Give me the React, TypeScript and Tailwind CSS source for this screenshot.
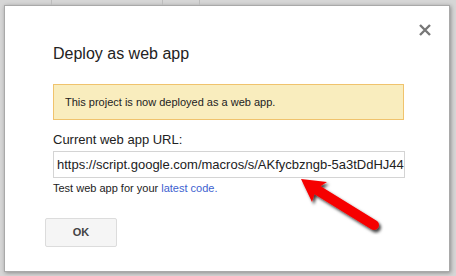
import React from "react";

function Arrow() {
  return (
    <svg
      className="absolute left-0 top-0 pointer-events-none"
      width={456}
      height={276}
      viewBox="0 0 456 276"
    >
      <defs>
        <filter id="sh" x="-20%" y="-20%" width="140%" height="140%">
          <feDropShadow dx="2" dy="2.5" stdDeviation="1.6" floodColor="#000" floodOpacity="0.75" />
        </filter>
      </defs>
      <g filter="url(#sh)">
        <line x1="314" y1="188" x2="374" y2="225" stroke="#f60000" strokeWidth="10" strokeLinecap="round" />
        <polygon points="301,179 312,202 316,189 327,182" fill="#f60000" />
      </g>
    </svg>
  );
}

export default function App() {
  return (
    <div className="relative w-[456px] h-[276px] overflow-hidden bg-[#d6d6d6] font-['Liberation_Sans',Arial,sans-serif]">
      {/* top strip of the underlying sheet */}
      <div className="flex h-[5px]">
        <div className="w-[52px] border-r border-[#bdbdbd]" />
        <div className="w-[111px] border-r border-[#bdbdbd]" />
        <div className="w-[37px] border-r border-[#bdbdbd]" />
      </div>

      <div className="pl-[4px]">
        <div className="flex flex-col w-[446px] h-[267px] bg-white border border-[#a9a9a9] shadow-[1px_1px_4px_rgba(0,0,0,0.35)] pt-[18px]">
          <div className="flex justify-end pr-[18px] h-[12px]">
            <button className="w-[12px] h-[12px] flex items-center justify-center">
              <svg width="12" height="12" viewBox="0 0 12 12">
                <path d="M1 1 L11 11 M11 1 L1 11" stroke="#777" strokeWidth="2.4" />
              </svg>
            </button>
          </div>

          <div className="flex flex-col items-start pl-[48px] pt-[6px]">
            <div className="text-[16px] leading-[24px] text-[#222]">Deploy as web app</div>
            <div className="mt-[18px] w-[351px] h-[36px] border border-[#f0c36d] bg-[#f9edbe] px-[11px] flex items-center text-[11px] text-[#222]">
              This project is now deployed as a web app.
            </div>
            <div className="mt-[12px] text-[13px] leading-[16px] text-[#222]">Current web app URL:</div>
            <input
              readOnly
              value="https://script.google.com/macros/s/AKfycbzngb-5a3tDdHJ445pQx7kVd2mW/exec"
              className="mt-[3px] block w-[352px] h-[27px] border border-[#d4d4d4] bg-white pl-[3px] pr-0 text-[13px] text-[#222] outline-none font-['Liberation_Sans',Arial,sans-serif]"
            />
            <div className="mt-[3px] text-[11px] leading-[14px] text-[#222]">
              Test web app for your <span className="text-[#3d5fd0]">latest code.</span>
            </div>
          </div>

          <div className="flex pl-[40px] mt-[23px]">
            <button className="w-[72px] h-[29px] border border-[#dcdcdc] rounded-[2px] bg-[#f5f5f5] text-[11px] font-bold text-[#444] flex items-center justify-center">
              OK
            </button>
          </div>
        </div>
      </div>

      <Arrow />
    </div>
  );
}
